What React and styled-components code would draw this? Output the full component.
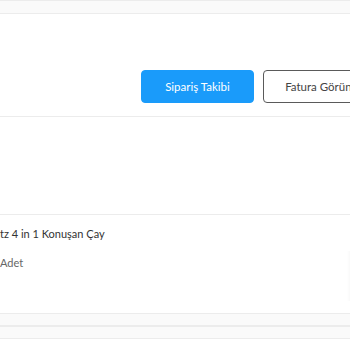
import React from "react";
import styled, { createGlobalStyle } from "styled-components";

const Global = createGlobalStyle`
  html, body { margin: 0; padding: 0; background: #fff; }
  body { font-family: "Lato", "Noto Sans", sans-serif; }
`;

const Page = styled.div`
  width: 350px;
  height: 350px;
  overflow: hidden;
  display: flex;
  flex-direction: column;
`;

const Band = styled.div`
  height: ${(p) => p.$h}px;
  background: #fafafa;
  border-top: 1px solid #ececec;
  border-bottom: 1px solid #ececec;
  box-sizing: border-box;
  flex-shrink: 0;
`;

const Header = styled.div`
  height: 103px;
  box-sizing: border-box;
  border-bottom: 1px solid #ececec;
  display: flex;
  align-items: flex-start;
  padding-top: 56px;
  padding-left: 141px;
  gap: 9px;
  flex-shrink: 0;
`;

const Button = styled.button`
  flex-shrink: 0;
  width: ${(p) => (p.$primary ? 113 : 130)}px;
  height: 33px;
  border-radius: 4px;
  font-family: "Lato", "Noto Sans", sans-serif;
  font-size: 11.5px;
  cursor: pointer;
  padding: 0;
  background: ${(p) => (p.$primary ? "#1a9bfa" : "#fff")};
  color: ${(p) => (p.$primary ? "#fff" : "#444")};
  border: 1px solid ${(p) => (p.$primary ? "#1a9bfa" : "#5a5a5a")};
`;

const Spacer = styled.div`
  height: ${(p) => p.$h}px;
  flex-shrink: 0;
`;

const ProductRow = styled.div`
  border-top: 1px solid #ececec;
  height: 99px;
  box-sizing: border-box;
  display: flex;
  flex-direction: column;
  padding-top: 11px;
  gap: 13px;
  flex-shrink: 0;
  position: relative;
`;

const Name = styled.div`
  font-size: 11px;
  color: #333;
  line-height: 16px;
  white-space: nowrap;
`;

const Qty = styled.div`
  font-size: 11px;
  color: #666;
  line-height: 16px;
`;

const EdgeShadow = styled.div`
  position: absolute;
  right: 0;
  top: 36px;
  width: 3px;
  height: 50px;
  background: linear-gradient(to right, rgba(0,0,0,0), rgba(0,0,0,0.025));
`;

export default function App() {
  return (
    <>
      <Global />
      <Page>
        <Band $h={14} />
        <Header>
          <Button $primary>Sipariş Takibi</Button>
          <Button>Fatura Görüntüle</Button>
        </Header>
        <Spacer $h={97} />
        <ProductRow>
          <Name>tz 4 in 1 Konuşan Çay</Name>
          <Qty>Adet</Qty>
          <EdgeShadow />
        </ProductRow>
        <Band $h={13} />
        <Band $h={13} />
      </Page>
    </>
  );
}
